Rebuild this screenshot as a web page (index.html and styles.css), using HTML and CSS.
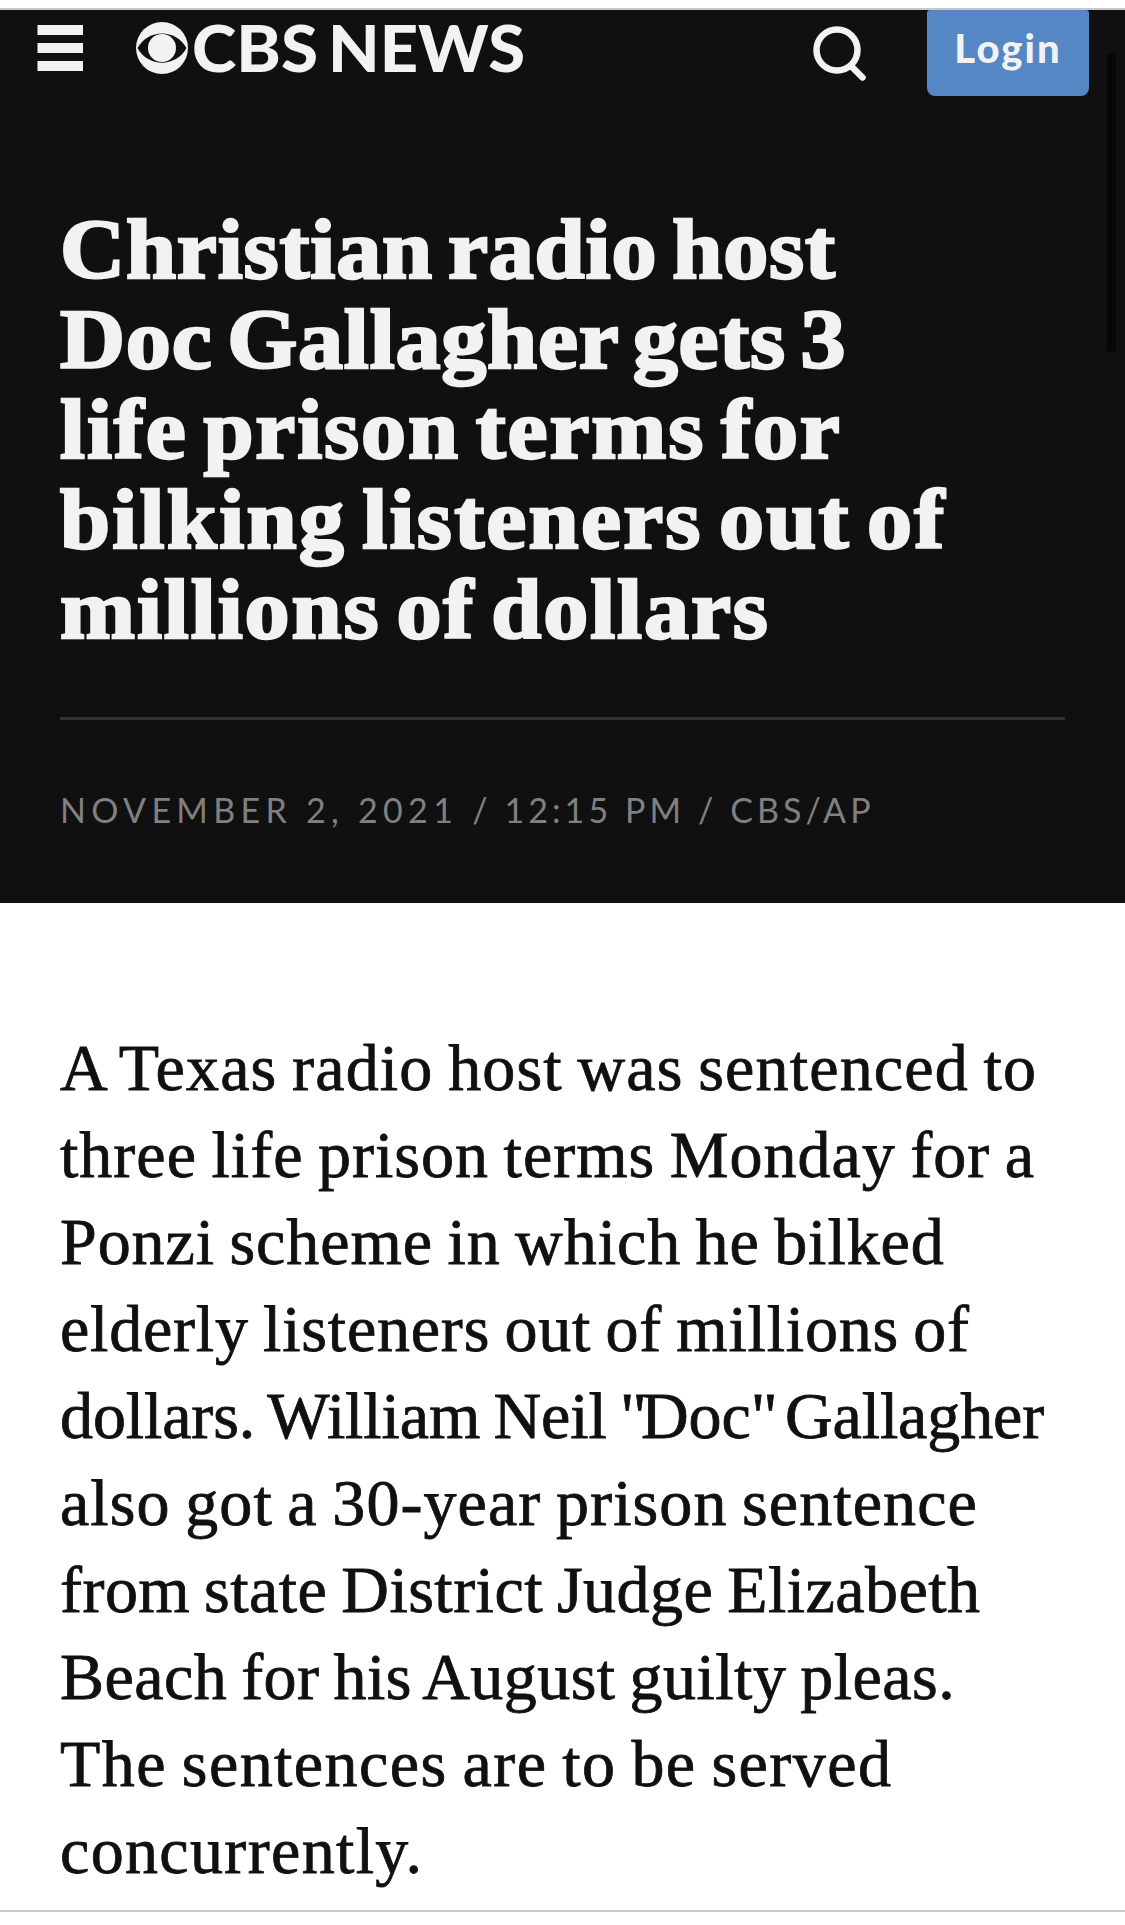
FILE: index.html
```
<!DOCTYPE html>
<html lang="en">
<head>
<meta charset="utf-8">
<title>CBS News</title>
<link rel="stylesheet" href="styles.css">
</head>
<body>
<header class="masthead">
  <nav class="bar">
    <svg class="menu" viewBox="0 0 46 46"><path d="M.5 0H46v10H.5zM.5 18H46v10H.5zM.5 36H46v10H.5z"/></svg>
    <svg class="logo" viewBox="0 0 390 56">
      <ellipse cx="26" cy="28" rx="26" ry="26"/>
      <path class="ink" d="M1.500 28C12 8.500 40 8.500 50.500 28C40 47.500 12 47.500 1.500 28z"/>
      <circle cx="26" cy="28" r="14"/>
      <text x="56" y="51.500" textLength="126" lengthAdjust="spacingAndGlyphs">CBS</text>
      <text x="192" y="51.500" textLength="197" lengthAdjust="spacingAndGlyphs">NEWS</text>
    </svg>
    <svg class="search" viewBox="0 0 54 56"><circle cx="24" cy="24" r="20.500"/><path d="M38 40L49.500 51.500"/></svg>
    <a class="login">Login</a>
  </nav>
  <h1 class="headline">
    <span class="line h1">Christian radio host</span>
    <span class="line h2">Doc Gallagher gets 3</span>
    <span class="line h3">life prison terms for</span>
    <span class="line h4">bilking listeners out of</span>
    <span class="line h5">millions of dollars</span>
  </h1>
  <p class="meta"><span class="date">NOVEMBER 2, 2021 </span>/ 12:15 PM / CBS/AP</p>
  <div class="thumb"></div>
</header>
<main class="story">
  <p class="copy">
    <span class="line p1">A Texas radio host was sentenced to</span>
    <span class="line p2">three life prison terms Monday for a</span>
    <span class="line p3">Ponzi scheme in which he bilked</span>
    <span class="line p4">elderly listeners out of millions of</span>
    <span class="line p5">dollars. William Neil <span class="quote">"</span>Doc<span class="quote">"</span> Gallagher</span>
    <span class="line p6">also got a 30-year prison sentence</span>
    <span class="line p7">from state District Judge Elizabeth</span>
    <span class="line p8">Beach for his August guilty pleas.</span>
    <span class="line p9">The sentences are to be served</span>
    <span class="line p10">concurrently.</span>
  </p>
</main>
</body>
</html>
```
FILE: styles.css
```
body { margin: 0; background: #fff; color: #101010; height: 1925px; overflow: hidden; }
h1, p { margin: 0; }
.line { display: block; white-space: nowrap; }

.masthead { display: flow-root; position: relative; margin-top: 8px; height: 893px; background: #101010; border-top: 2px solid #c8c8c8; }
.bar { display: flex; align-items: flex-start; height: 174px; box-sizing: border-box; padding: 0 36px 0 37px; }
.bar svg { fill: #f2f2f2; overflow: visible; }
.menu { width: 46px; height: 46px; margin-top: 15px; }
.logo { width: 390px; height: 56px; margin: 10px 0 0 53px; }
.logo text { font: 900 65px Lato, sans-serif; }
.logo .ink { fill: #101010; }
.bar .search { width: 54px; height: 56px; margin: 16px 0 0 287px; fill: none; stroke: #f2f2f2; stroke-width: 6.500; stroke-linecap: round; }
.login { margin-left: auto; width: 162px; height: 86px; text-align: center; background: #5487c4; color: #f2f2f2; border-radius: 3px 3px 8px 8px; font: 900 40px/77px Lato, sans-serif; letter-spacing: 2px; }

.headline { margin: 20px 60px 0; height: 513px; border-bottom: 3px solid #333; font: 700 85px/90px "Liberation Serif", serif; color: #f2f2f2; word-spacing: -8px; -webkit-text-stroke: 2.500px #f2f2f2; }
.headline .line { transform: scaleX(1.06); transform-origin: 0 0; }
.h1 { letter-spacing: .79px; }
.h2 { letter-spacing: .72px; }
.h3 { letter-spacing: 1.75px; }
.h4 { letter-spacing: 2.1px; }
.h5 { letter-spacing: 1.78px; }

.meta { margin: 69px 60px 0; font: 400 34px/42px Lato, sans-serif; letter-spacing: 4.08px; color: #808080; }
.date { letter-spacing: 5.3px; }
.thumb { position: absolute; top: 43px; left: 1107px; width: 9px; height: 300px; border-radius: 5px; background: #070707; }

.story { box-sizing: border-box; height: 1009px; border-bottom: 2px solid #c8c8c8; }
.copy { padding: 121px 60px 0; font: 400 66px/87px "Liberation Serif", serif; word-spacing: -3px; -webkit-text-stroke: .8px #101010; }
.p1 { letter-spacing: 1.16px; }
.p2 { letter-spacing: 1.01px; }
.p3 { letter-spacing: .94px; }
.p4 { letter-spacing: .79px; }
.p5 { letter-spacing: -.12px; }
.p6 { letter-spacing: 1.08px; }
.p7 { letter-spacing: .46px; }
.p8 { letter-spacing: .46px; }
.p9 { letter-spacing: 1.43px; }
.p10 { letter-spacing: 1.35px; }
.quote { letter-spacing: -6px; }
```
